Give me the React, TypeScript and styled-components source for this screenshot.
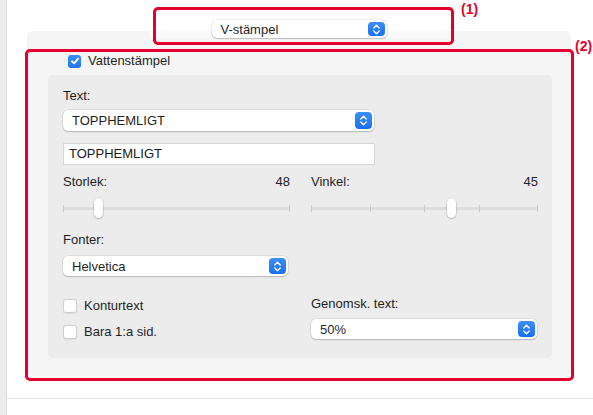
import React from "react";
import styled, { createGlobalStyle } from "styled-components";

const Global = createGlobalStyle`
  html, body { margin: 0; padding: 0; background: #fff; }
  body {
    font-family: "Liberation Sans", Arial, Helvetica, sans-serif;
    font-size: 13px;
    color: #1f1f1f;
  }
`;

const Root = styled.div`
  position: relative;
  width: 593px;
  height: 415px;
  display: flex;
  overflow: hidden;
  background: #fff;
`;

const Rail = styled.div`
  width: 6px;
  flex: none;
  background: #ececec;
  border-right: 1px solid #dcdcdc;
`;

const Main = styled.div`
  flex: 1;
  display: flex;
  flex-direction: column;
`;

const Content = styled.div`
  height: 399px;
  box-sizing: border-box;
  border-bottom: 1px solid #e3e3e3;
  padding: 20px 22px 0 20px;
  display: flex;
  flex-direction: column;
`;

const Header = styled.div`
  display: flex;
  justify-content: center;
  position: relative;
  z-index: 1;
  height: 18px;
`;

const Strip = styled.div`
  width: 298px;
  height: 18px;
  display: flex;
  justify-content: center;
  background: linear-gradient(to bottom, transparent 11px, #f9f9f9 11px);
`;

const Panel = styled.div`
  margin-top: -7px;
  height: 345px;
  box-sizing: border-box;
  background: #f5f5f5;
  border-radius: 5px;
  padding: 22px 19px 18px 21px;
  display: flex;
  flex-direction: column;
`;

const CheckRow = styled.label<{ $indent?: number }>`
  display: flex;
  align-items: center;
  gap: 7px;
  height: 16px;
  line-height: 16px;
  margin-left: ${(p) => p.$indent ?? 0}px;
  color: #1f1f1f;
`;

const Box = styled.span<{ $checked?: boolean }>`
  width: ${(p) => (p.$checked ? 13 : 14)}px;
  height: ${(p) => (p.$checked ? 13 : 14)}px;
  box-sizing: border-box;
  border-radius: 3px;
  display: inline-flex;
  align-items: center;
  justify-content: center;
  flex: none;
  background: ${(p) => (p.$checked ? "linear-gradient(#3d8ff8, #1f74f2)" : "#fff")};
  border: ${(p) => (p.$checked ? "none" : "1px solid #cfcfcf")};
  box-shadow: ${(p) => (p.$checked ? "none" : "0 0.5px 1px rgba(0,0,0,0.08)")};
`;

const InnerBox = styled.div`
  margin-top: 6px;
  flex: 1;
  background: #ececec;
  border-radius: 5px;
  padding: 13px 14px 0 15px;
  display: flex;
  flex-direction: column;
`;

const Label = styled.div`
  height: 16px;
  line-height: 16px;
  color: #1f1f1f;
`;

const Popup = styled.div<{ $w: number; $h: number }>`
  width: ${(p) => p.$w}px;
  height: ${(p) => p.$h}px;
  box-sizing: border-box;
  background: #fff;
  border-radius: 5px;
  box-shadow: 0 0 0 0.5px rgba(0, 0, 0, 0.12), 0 1px 1.5px rgba(0, 0, 0, 0.18);
  display: flex;
  align-items: center;
  justify-content: space-between;
  padding: 0 2px 0 9px;
  color: #1f1f1f;
  flex: none;
`;

const Stepper = styled.span<{ $h: number }>`
  width: 17px;
  height: ${(p) => p.$h}px;
  border-radius: 4px;
  background: linear-gradient(#3c8ff8, #1a6ff0);
  display: inline-flex;
  align-items: center;
  justify-content: center;
`;

const TextField = styled.div`
  width: 312px;
  height: 22px;
  box-sizing: border-box;
  background: #fff;
  border: 1px solid #d6d6d6;
  padding-left: 5px;
  line-height: 20px;
  color: #1a1a1a;
`;

const Stack = styled.div<{ $mt: number }>`
  margin-top: ${(p) => p.$mt}px;
`;

const Columns = styled.div<{ $mt: number }>`
  margin-top: ${(p) => p.$mt}px;
  display: grid;
  grid-template-columns: 227px 227px;
  column-gap: 21px;
`;

const Col = styled.div`
  display: flex;
  flex-direction: column;
`;

const ValueRow = styled.div`
  display: flex;
  justify-content: space-between;
  height: 16px;
  line-height: 16px;
  color: #1f1f1f;
`;

const SliderArea = styled.div`
  margin-top: 8px;
  height: 20px;
  position: relative;
`;

const Track = styled.div`
  position: absolute;
  left: 0;
  right: 0;
  top: 9px;
  height: 3px;
  border-radius: 1.5px;
  background: #dddddd;
`;

const Tick = styled.span`
  position: absolute;
  top: 7px;
  width: 1px;
  height: 7px;
  background: #c9c9c9;
`;

const Thumb = styled.span`
  position: absolute;
  top: 0;
  width: 9px;
  height: 20px;
  border-radius: 5px;
  background: #fff;
  box-shadow: 0 0 0 0.5px rgba(0, 0, 0, 0.15), 0 1px 1.5px rgba(0, 0, 0, 0.2);
`;

const CheckList = styled.div`
  display: flex;
  flex-direction: column;
  gap: 10px;
  padding-top: 2px;
`;

const Mark = styled.div<{ $left: number; $top: number; $w: number; $h: number }>`
  position: absolute;
  left: ${(p) => p.$left}px;
  top: ${(p) => p.$top}px;
  width: ${(p) => p.$w}px;
  height: ${(p) => p.$h}px;
  box-sizing: border-box;
  border: 3px solid #e4002b;
  border-radius: 5px;
  pointer-events: none;
  z-index: 5;
`;

const MarkLabel = styled.span<{ $left: number; $top: number }>`
  position: absolute;
  left: ${(p) => p.$left}px;
  top: ${(p) => p.$top}px;
  font-weight: bold;
  font-size: 14px;
  line-height: 16px;
  color: #e4002b;
  z-index: 5;
`;

const Chevrons = () => (
  <svg width="9" height="13" viewBox="0 0 9 13" fill="none">
    <path d="M1.8 5 L4.5 2.3 L7.2 5" stroke="#fff" strokeWidth="1.4" strokeLinecap="round" strokeLinejoin="round" />
    <path d="M1.8 8 L4.5 10.7 L7.2 8" stroke="#fff" strokeWidth="1.4" strokeLinecap="round" strokeLinejoin="round" />
  </svg>
);

const Check = () => (
  <svg width="10" height="10" viewBox="0 0 10 10" fill="none">
    <path d="M2 5.3 L4.1 7.4 L8 2.6" stroke="#fff" strokeWidth="1.8" strokeLinecap="round" strokeLinejoin="round" />
  </svg>
);

const Select: React.FC<{ w: number; h: number; value: string }> = ({ w, h, value }) => (
  <Popup $w={w} $h={h}>
    <span>{value}</span>
    <Stepper $h={h - 4}>
      <Chevrons />
    </Stepper>
  </Popup>
);

const CheckBox: React.FC<{ checked?: boolean; label: string; indent?: number }> = ({ checked, label, indent }) => (
  <CheckRow $indent={indent}>
    <Box $checked={checked}>{checked && <Check />}</Box>
    <span>{label}</span>
  </CheckRow>
);

const Slider: React.FC<{ ticks: number[]; value: number }> = ({ ticks, value }) => {
  const width = 227;
  const thumb = 9;
  return (
    <SliderArea>
      <Track />
      {ticks.map((t, i) => {
        const x = t === 0 ? 0 : t === 1 ? width - 1 : 4 + t * (width - 9);
        return <Tick key={i} style={{ left: x }} />;
      })}
      <Thumb style={{ left: value * (width - thumb) }} />
    </SliderArea>
  );
};

export default function App() {
  return (
    <Root>
      <Global />
      <Rail />
      <Main>
        <Content>
          <Header>
            <Strip>
              <Select w={175} h={18} value="V-stämpel" />
            </Strip>
          </Header>
          <Panel>
            <CheckBox checked label="Vattenstämpel" indent={20} />
            <InnerBox>
              <Label>Text:</Label>
              <Stack $mt={6}>
                <Select w={311} h={21} value="TOPPHEMLIGT" />
              </Stack>
              <Stack $mt={12}>
                <TextField>TOPPHEMLIGT</TextField>
              </Stack>
              <Columns $mt={9}>
                <Col>
                  <ValueRow>
                    <span>Storlek:</span>
                    <span>48</span>
                  </ValueRow>
                  <Slider ticks={[0, 1]} value={0.14} />
                  <Stack $mt={14}>
                    <Label>Fonter:</Label>
                  </Stack>
                  <Stack $mt={8}>
                    <Select w={225} h={20} value="Helvetica" />
                  </Stack>
                </Col>
                <Col>
                  <ValueRow>
                    <span>Vinkel:</span>
                    <span>45</span>
                  </ValueRow>
                  <Slider ticks={[0, 0.25, 0.5, 0.75, 1]} value={0.625} />
                </Col>
              </Columns>
              <Columns $mt={20}>
                <CheckList>
                  <CheckBox label="Konturtext" />
                  <CheckBox label="Bara 1:a sid." />
                </CheckList>
                <Col>
                  <Label>Genomsk. text:</Label>
                  <Stack $mt={7}>
                    <Select w={226} h={20} value="50%" />
                  </Stack>
                </Col>
              </Columns>
            </InnerBox>
          </Panel>
        </Content>
      </Main>
      <Mark $left={153} $top={7} $w={301} $h={38} />
      <MarkLabel $left={461} $top={1}>(1)</MarkLabel>
      <Mark $left={25} $top={49} $w={549} $h={332} />
      <MarkLabel $left={575} $top={38}>(2)</MarkLabel>
    </Root>
  );
}
